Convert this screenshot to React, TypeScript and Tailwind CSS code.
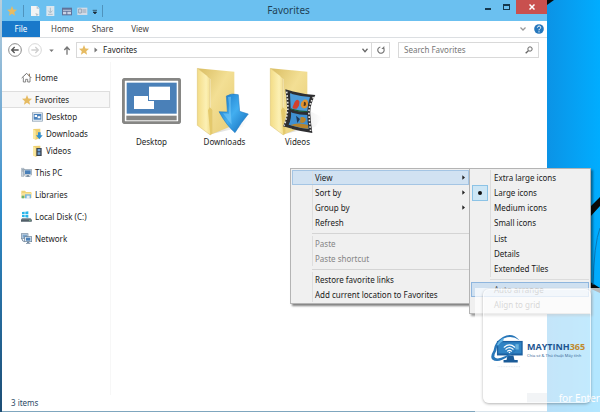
import type { ReactNode } from 'react'
import clsx from 'clsx'

const tabs = ['Home', 'Share', 'View']

const menuGroups = [
  [
    { label: 'View', submenu: true, active: true },
    { label: 'Sort by', submenu: true },
    { label: 'Group by', submenu: true },
    { label: 'Refresh' },
  ],
  [
    { label: 'Paste', disabled: true },
    { label: 'Paste shortcut', disabled: true },
  ],
  [{ label: 'Restore favorite links' }, { label: 'Add current location to Favorites' }],
]

const viewModes = ['Extra large icons', 'Large icons', 'Medium icons', 'Small icons', 'List', 'Details', 'Extended Tiles']

function Star({ className }: { className?: string }) {
  return (
    <svg viewBox="0 0 24 24" className={clsx('size-[10px] shrink-0', className)}>
      <path d="M12 0l3.4 8.2 8.6.7-6.6 5.8 2 8.8-7.4-4.8-7.4 4.8 2-8.8L0 8.900l8.600-.7z" fill="#e6bb62" />
    </svg>
  )
}

function HouseIcon() {
  return (
    <svg viewBox="0 0 33 33" className="size-[11px]">
      <path d="M7 16v14h7v-8h6v8h7V16" fill="#fff" stroke="#6f6f6f" strokeWidth="2.500" />
      <path d="M2 18L17 4l14 14" fill="none" stroke="#6f6f6f" strokeWidth="3" />
      <path d="M25 5v8" stroke="#8b6b4a" strokeWidth="3" />
    </svg>
  )
}

function DesktopSmallIcon() {
  return (
    <svg viewBox="0 0 33 30" className="h-[10px] w-[11px]">
      <rect x="1.500" y="2.500" width="30" height="25" fill="#e9f1f8" stroke="#7d93a8" strokeWidth="2" />
      <rect x="5" y="6" width="23" height="17" fill="#4a82bd" />
      <path d="M8 9h7v6H8zM17 13h8v6h-8z" fill="#fff" />
    </svg>
  )
}

function FolderSmallIcon({ kind }: { kind: 'downloads' | 'videos' }) {
  return (
    <svg viewBox="0 0 33 36" className="h-3 w-[11px]">
      <path d="M3 3l22-1v28l-14 5-8-4z" fill="#eecf70" />
      <path d="M3 3l8 5v27l-8-4z" fill="#fbe9a0" />
      {kind === 'downloads' ? (
        <path d="M18 13h8v9h6L22 34 12 22h6z" fill="#2f8fd0" />
      ) : (
        <>
          <path d="M13 9h16v24H13z" fill="#3c4450" />
          <path d="M17 12h8v7h-8zM17 22h8v7h-8z" fill="#6fa4d8" />
        </>
      )}
    </svg>
  )
}

function ThisPcIcon() {
  return (
    <svg viewBox="0 0 33 33" className="size-[11px]">
      <path d="M1 4h8v24H1z" fill="#cdd6de" stroke="#8797a6" strokeWidth="1.500" />
      <path d="M3 8h4M3 12h4" stroke="#5c6f82" strokeWidth="1.500" />
      <rect x="9" y="7" width="23" height="17" fill="#dfe7ee" stroke="#6d7f90" strokeWidth="1.500" />
      <rect x="12" y="10" width="17" height="11" fill="#4a80b8" />
      <path d="M17 24h7v4h4v2H13v-2h4z" fill="#8394a4" />
    </svg>
  )
}

function LibrariesIcon() {
  return (
    <svg viewBox="0 0 33 33" className="size-[11px]">
      <path d="M1 5h11l3 4h16v7H1z" fill="#f0d478" />
      <path d="M1 12h31v15H1z" fill="#f7e29a" />
      <path d="M2 20h8v8H2z" fill="#6fb36f" />
      <path d="M12 16h18v12H12z" fill="#79b8dd" />
      <path d="M17 20h9v10h-9z" fill="#e9eef2" />
    </svg>
  )
}

function DiskIcon() {
  return (
    <svg viewBox="0 0 33 33" className="size-[11px]">
      <path d="M3 3l8-1v8H3zM13 2l9-1v9h-9zM3 12h8v7l-8-1zM13 12h9v8l-9-1z" fill="#27b4ea" />
      <path d="M3 22h26l3 4v6H0v-6z" fill="#6f7c86" />
      <path d="M0 26h32v5H0z" fill="#525f69" />
      <path d="M24 28h5" stroke="#8fe28f" strokeWidth="2" />
    </svg>
  )
}

function NetworkIcon() {
  return (
    <svg viewBox="0 0 33 33" className="size-[11px]">
      <rect x="1" y="2" width="20" height="15" fill="#c4d3e0" stroke="#7389a0" strokeWidth="2" />
      <rect x="5" y="5" width="13" height="9" fill="#7ba5cd" />
      <path d="M3 18q0 7 8 8" stroke="#7389a0" strokeWidth="3" fill="none" />
      <rect x="11" y="11" width="21" height="15" fill="#dfe8f0" stroke="#637b93" strokeWidth="2" />
      <rect x="15" y="14" width="13" height="9" fill="#4a80b8" />
      <path d="M18 26h7v4h3v2H15v-2h3z" fill="#7389a0" />
    </svg>
  )
}

function DesktopIcon() {
  return (
    <svg viewBox="0 0 177 138" className="h-[46px] w-[59px]">
      <rect x="4" y="4" width="169" height="130" rx="5" fill="#fff" stroke="#868684" strokeWidth="9" />
      <rect x="14" y="14" width="150" height="93" fill="#4a80b8" />
      <rect x="36" y="54" width="60" height="39" fill="#fff" />
      <rect x="78" y="22" width="69" height="47" fill="#4a80b8" />
      <rect x="81" y="26" width="63" height="40" fill="#fff" />
      <rect x="13" y="113" width="151" height="14" fill="#868684" />
    </svg>
  )
}

function FolderIcon({ id, children }: { id: string; children: ReactNode }) {
  return (
    <svg viewBox="0 0 165 207" className="mr-1 h-[69px] w-[55px]">
      <defs>
        <linearGradient id={`${id}-back`} x1="0" y1="0" x2="1" y2="1">
          <stop offset="0" stopColor="#d9bd62" />
          <stop offset="0.450" stopColor="#f3df94" />
          <stop offset="1" stopColor="#e6cb74" />
        </linearGradient>
        <linearGradient id={`${id}-flap`} x1="0" y1="0" x2="1" y2="0">
          <stop offset="0" stopColor="#f3dc86" />
          <stop offset="0.600" stopColor="#fcf0b4" />
          <stop offset="1" stopColor="#efd77f" />
        </linearGradient>
        <linearGradient id={`${id}-shade`} x1="0" y1="0" x2="1" y2="0">
          <stop offset="0" stopColor="#9a9a9a" stopOpacity="0.400" />
          <stop offset="1" stopColor="#9a9a9a" stopOpacity="0" />
        </linearGradient>
      </defs>
      <path d="M100 120l62 30-20 30-96 22z" fill={`url(#${id}-shade)`} />
      <path d="M7 4l111 10v160l-72 29V36z" fill={`url(#${id}-back)`} />
      <path d="M7 4l31 23 6 8v86l7 8v70l-5 5L7 175z" fill={`url(#${id}-flap)`} stroke="#d8bd66" strokeWidth="1.500" />
      <path d="M39 130l5-9 7 8v70l-5 5z" fill="#e4c96c" />
      {children}
    </svg>
  )
}

function DownloadsIcon() {
  return (
    <FolderIcon id="downloads">
      <defs>
        <linearGradient id="arrow" x1="0" y1="0" x2="1" y2="1">
          <stop offset="0" stopColor="#1673c4" />
          <stop offset="0.500" stopColor="#42aef0" />
          <stop offset="1" stopColor="#0f66b5" />
        </linearGradient>
      </defs>
      <path d="M94 87q16-10 36-4l4 50 26 8q-22 26-40 56-26-22-48-63l25 1z" fill="url(#arrow)" stroke="#1c74bd" strokeWidth="1.500" />
      <path d="M99 90q6 26 3 50l-18-1q14 20 26 34-4-48-2-84z" fill="#7fd0fb" opacity="0.500" />
    </FolderIcon>
  )
}

function VideosIcon() {
  return (
    <FolderIcon id="videos">
      <path d="M52 67q44 14 90 17-17 30-15 58 2 30 6 56-44-6-88-20 14-28 12-56-1-30-5-55z" fill="#2e2e31" />
      <path d="M56 74q6 50 2 62-3 24-10 40M137 90q-16 26-14 54 2 28 5 48" fill="none" stroke="#e3e3e0" strokeWidth="5" strokeDasharray="5 5" />
      <path d="M66 79q30 9 60 11-8 22-8 44-26 1-50-8z" fill="#4c9bd8" />
      <path d="M69 136q26 8 49 8 0 22 4 42-32-3-60-13 9-18 7-37z" fill="#3f90d2" />
      <path d="M80 105q8-12 14-2 2 14-8 22-14 2-12-6zM78 126l12-14" fill="#d23f2c" />
      <path d="M108 98q14-2 12 14-2 14-14 12-12-6-6-18z" fill="#e0912f" />
      <path d="M108 104q6 0 6 7t-7 6z" fill="#4d341b" />
      <path d="M68 124q26 8 50 8v3q-26 2-50-8z" fill="#1f5a34" />
      <path d="M98 150q14-2 16 8-6 14-18 8zM76 172q20-6 44 2l1 11q-28-2-54-11z" fill="#b8842c" />
      <path d="M84 146l12 10-8 12z" fill="#203a58" />
    </FolderIcon>
  )
}

function BrandLogo() {
  return (
    <svg viewBox="0 0 104 106" className="h-[35px] w-[35px] shrink-0">
      <path d="M20 24h78v44H20z" fill="#1c5f9f" />
      <path d="M24 28h70v34H24z" fill="#2f83c4" />
      <path d="M52 68h18l3 14h10v7H40v-7h9z" fill="#1b5b98" />
      <path d="M88 22Q66-4 38 12 12 28 10 52q-12 20-4 28 16 14 50-10 22-14 34-34-20 22-44 34-28 14-34 2 0-8 6-18Q22 26 42 16q24-10 46 6z" fill="#2876b8" />
      <path d="M20 36q6-14 22-22l-3 10q-12 6-15 14z" fill="#62b3e4" />
      <g fill="none" stroke="#fff" strokeWidth="3.500" strokeLinecap="round">
        <path d="M42 43q16-14 32 0M47 49q11-9 22 0M52 55q6-5 12 0" />
      </g>
      <circle cx="58" cy="59" r="2.500" fill="#fff" />
      <path d="M76 34h10v16H76z" fill="#6cb3de" />
      <path d="M22 102h70" stroke="#c8d0d8" strokeWidth="1.500" strokeDasharray="3 2" />
    </svg>
  )
}

function TitleBar() {
  return (
    <header className="relative flex h-[21px] items-start justify-between bg-[#6bc0f0]">
      <div className="flex h-full items-center pl-[5px]">
        <Star />
        <span className="ml-[6px] h-3 w-px bg-[#4f93bd]" />
        <svg viewBox="0 0 210 36" className="ml-1 h-3 w-[70px]">
          <path d="M9 3h18l7 7v23H9z" fill="#f3f4f4" />
          <path d="M26 3v8h8M22 24l10 4-6 6z" fill="#b9c2c9" />
          <path d="M55 3h24v30H55z" fill="#dbe6ee" />
          <path d="M67 8v14M61 17l6 7 6-7M60 28h14" fill="none" stroke="#a9bccb" strokeWidth="3" />
          <path d="M102 8h30v23h-30z" fill="#5f7199" />
          <path d="M105 14h24v3h-24zM105 20h10v8h-10zM118 20h11v8h-11z" fill="#c9d2e4" />
          <path d="M148 8h30v22h-30z" fill="#d3dbe6" />
          <path d="M152 12h8v12h-8zM163 15h12M163 21h12" stroke="#8997ab" strokeWidth="2.500" fill="none" />
          <path d="M194 16h13M195 21h11l-5 6z" stroke="#1c2b36" strokeWidth="2" fill="#1c2b36" />
        </svg>
        <span className="ml-1 h-3 w-px bg-[#4f93bd]" />
      </div>
      <h1 className="absolute inset-x-0 top-[2px] ml-7 text-center text-[10px] leading-4 text-[#1f4256]">Favorites</h1>
      <div className="flex h-[14px]">
        <button aria-label="Minimize" className="flex w-[19px] items-center justify-center">
          <span className="mt-1 h-[2px] w-[6px] bg-[#16384e]" />
        </button>
        <button aria-label="Maximize" className="flex w-[19px] items-center justify-center">
          <span className="h-[6px] w-[7px] border border-t-2 border-[#16384e]" />
        </button>
        <button aria-label="Close" className="flex w-[31px] items-center justify-center bg-[#c9504e]">
          <svg viewBox="0 0 12 12" className="size-[6px]">
            <path d="M1 1l10 10M11 1L1 11" stroke="#fff" strokeWidth="3" />
          </svg>
        </button>
      </div>
    </header>
  )
}

function Ribbon() {
  return (
    <nav className="flex h-[17px] items-stretch border-b border-[#dcdfe2] text-[#444]">
      <button className="w-[38px] bg-[#1979ca] text-white">File</button>
      <div className="flex gap-[18px] pl-[11px]">
        {tabs.map((tab) => (
          <button key={tab}>{tab}</button>
        ))}
      </div>
      <div className="ml-auto flex items-center gap-2 pr-[3px]">
        <button aria-label="Expand ribbon">
          <svg viewBox="0 0 12 8" className="h-1 w-[6px]">
            <path d="M1 1l5 5 5-5" fill="none" stroke="#999" strokeWidth="2.500" />
          </svg>
        </button>
        <button aria-label="Help">
          <svg viewBox="0 0 30 30" className="size-[10px]">
            <circle cx="15" cy="15" r="14.500" fill="#2577bd" />
            <path d="M10 11q1-5 5.500-5T20 10.500q0 3-3 4.500-2 1.500-2 4" fill="none" stroke="#fff" strokeWidth="3" />
            <circle cx="15" cy="23.500" r="2" fill="#fff" />
          </svg>
        </button>
      </div>
    </nav>
  )
}

function AddressRow() {
  return (
    <div className="flex h-6 items-center pr-2 pl-[6px]">
      <button aria-label="Back">
        <svg viewBox="0 0 42 42" className="size-[14px]">
          <circle cx="21" cy="21" r="19" fill="none" stroke="#8a8a8a" strokeWidth="3" />
          <path d="M32 21H12M20 12l-9 9 9 9" fill="none" stroke="#555" strokeWidth="4" />
        </svg>
      </button>
      <button aria-label="Forward" className="ml-[6px]">
        <svg viewBox="0 0 42 42" className="size-[14px]">
          <circle cx="21" cy="21" r="19" fill="none" stroke="#d8d8d8" strokeWidth="3" />
          <path d="M10 21h20M22 12l9 9-9 9" fill="none" stroke="#cfcfcf" strokeWidth="4" />
        </svg>
      </button>
      <button aria-label="Recent locations" className="ml-[7px]">
        <svg viewBox="0 0 12 8" className="h-[3px] w-[5px]">
          <path d="M0 1h12L6 8z" fill="#777" />
        </svg>
      </button>
      <button aria-label="Up" className="ml-[9px]">
        <svg viewBox="0 0 24 27" className="h-[9px] w-2">
          <path d="M12 26V4M4 12l8-9 8 9" fill="none" stroke="#777" strokeWidth="4" />
        </svg>
      </button>
      <div className="ml-[5px] flex h-4 flex-1 items-center border border-[#d9d9d9]">
        <Star className="ml-[2px]" />
        <svg viewBox="0 0 9 14" className="ml-[5px] h-[6px] w-1">
          <path d="M1 1l7 6-7 6z" fill="#777" />
        </svg>
        <span className="ml-[5px] text-[#1e1e1e]">Favorites</span>
        <button aria-label="Previous locations" className="ml-auto flex w-3 justify-center">
          <svg viewBox="0 0 12 9" className="h-[5px] w-[6px]">
            <path d="M1 1l5 6 5-6" fill="none" stroke="#666" strokeWidth="2.500" />
          </svg>
        </button>
        <button aria-label="Refresh" className="flex h-full w-[18px] items-center justify-center border-l border-[#d9d9d9]">
          <svg viewBox="0 0 24 24" className="size-2">
            <path d="M19 6a9.500 9.500 0 1 1-9-3" fill="none" stroke="#777" strokeWidth="3.500" />
            <path d="M13 9h9V0z" fill="#777" />
          </svg>
        </button>
      </div>
      <label className="ml-2 flex h-4 w-[141px] items-center border border-[#d9d9d9] pr-[5px] pl-[5px]">
        <input type="search" aria-label="Search Favorites" placeholder="Search Favorites" className="w-full min-w-0 outline-none placeholder:text-[#777]" />
        <svg viewBox="0 0 24 24" className="size-2 shrink-0">
          <circle cx="15" cy="9" r="6.500" fill="none" stroke="#666" strokeWidth="3" />
          <path d="M10 14l-8 8" stroke="#666" strokeWidth="4" />
        </svg>
      </label>
    </div>
  )
}

function NavItem({ icon, label, className }: { icon: ReactNode; label: string; className?: string }) {
  return (
    <a href="#" className={clsx('flex h-[17px] items-center gap-[3px] pl-[19px]', className)}>
      <span className="flex w-[11px] justify-center">{icon}</span>
      {label}
    </a>
  )
}

function Sidebar() {
  return (
    <aside className="flex w-[109px] flex-col border-r border-[#f7f7f7] pt-[7px] text-[#1e1e1e]">
      <NavItem icon={<HouseIcon />} label="Home" />
      <NavItem icon={<Star />} label="Favorites" className="mt-[5px] border border-l-0 border-[#dedede] bg-[#f7f7f7]" />
      <NavItem icon={<DesktopSmallIcon />} label="Desktop" className="pl-[30px]" />
      <NavItem icon={<FolderSmallIcon kind="downloads" />} label="Downloads" className="pl-[30px]" />
      <NavItem icon={<FolderSmallIcon kind="videos" />} label="Videos" className="pl-[30px]" />
      <div className="mt-[5px] flex flex-col gap-[5px]">
        <NavItem icon={<ThisPcIcon />} label="This PC" />
        <NavItem icon={<LibrariesIcon />} label="Libraries" />
        <NavItem icon={<DiskIcon />} label="Local Disk (C:)" />
        <NavItem icon={<NetworkIcon />} label="Network" />
      </div>
    </aside>
  )
}

function FileTile({ icon, label }: { icon: ReactNode; label: string }) {
  return (
    <a href="#" className="flex w-[73px] flex-col items-center">
      <span className="flex h-[70px] items-center">{icon}</span>
      <span className="leading-3">{label}</span>
    </a>
  )
}

function Submenu() {
  return (
    <div role="menu" className="absolute -top-px left-[178px] flex w-[122px] flex-col border border-[#b4b4b4] bg-[#f0f0f0] p-px shadow-[2px_2px_2px_rgba(0,0,0,0.4)]">
      <div className="flex h-[107px] flex-col">
        {viewModes.map((mode) => (
          <button key={mode} role="menuitemradio" aria-checked={mode === 'Large icons'} className="flex flex-1 items-center text-left">
            <span
              className={clsx(
                'mr-[2px] ml-px flex h-full w-4 items-center justify-center',
                mode === 'Large icons' && 'border border-[#8cc3e6] bg-[#cde6f5]',
              )}
            >
              {mode === 'Large icons' && <span className="size-1 rounded-full bg-[#111]" />}
            </span>
            <span className="flex h-full items-center border-l border-[#dcdcdc] pl-[3px]">{mode}</span>
          </button>
        ))}
      </div>
      <hr className="my-[2px] ml-[19px] border-[#dcdcdc]" />
      <button role="menuitem" className="h-[15px] border border-[#8fb6de] bg-[#cfe0f0] pl-[22px] text-left leading-3 text-[#555]">
        Auto arrange
      </button>
      <button role="menuitem" className="h-[15px] pl-[23px] text-left text-[#555]">
        Align to grid
      </button>
    </div>
  )
}

function ContextMenu() {
  return (
    <div role="menu" className="absolute top-[168px] left-[290px] w-[181px] border border-[#b4b4b4] bg-[#f0f0f0] p-px text-[#1a1a1a] shadow-[2px_2px_2px_rgba(0,0,0,0.5)]">
      {menuGroups.map((group, index) => (
        <div key={group[0].label}>
          {index > 0 && <hr className="mt-[3px] mb-[2px] ml-5 border-[#d4d4d4]" />}
          {group.map((item) => (
            <button
              key={item.label}
              role="menuitem"
              disabled={item.disabled}
              className={clsx(
                'flex h-[15px] w-full items-center pr-1 text-left disabled:text-[#858585]',
                item.active && 'bg-[#d1e2f2] outline -outline-offset-1 outline-[#a4c5e4]',
              )}
            >
              <span className="mr-[2px] ml-5 h-full w-px bg-[#dedede]" />
              {item.label}
              {item.submenu && (
                <svg viewBox="0 0 9 14" className="ml-auto h-[5px] w-[3px]">
                  <path d="M1 0l8 7-8 7z" fill="#222" />
                </svg>
              )}
            </button>
          ))}
        </div>
      ))}
      <Submenu />
    </div>
  )
}

function Watermark() {
  return (
    <>
      <div className="absolute right-0 bottom-0 h-[124px] w-[125px] bg-white/70" />
      <div className="absolute right-0 bottom-[6px] flex items-center gap-3 text-[10px] leading-4 whitespace-nowrap text-white">
        <span className="h-[10px] w-5 bg-[#dfe5ea]/50" />
        <p>for Enter</p>
      </div>
      <div className="absolute right-[9px] bottom-[9px] flex h-[114px] w-[108px] flex-col justify-center rounded-md border border-white/60 bg-white/20 pt-2 pl-[6px] shadow-[0_1px_3px_rgba(0,0,0,0.3)]">
        <div className="flex items-center gap-[2px]">
          <BrandLogo />
          <div>
            <p className="font-['Open_Sans',sans-serif] text-[9px] leading-[12px] font-bold text-[#1d5590]">
              MAYTINH<span className="text-[#c08a2e]">365</span>
            </p>
            <p className="text-[4px] leading-[6px] whitespace-nowrap text-[#3a6a9a]">Chia sẻ &amp; Thủ thuật Máy tính</p>
          </div>
        </div>
      </div>
    </>
  )
}

export default function App() {
  return (
    <div className="relative flex min-h-screen overflow-hidden bg-[#00a8fb] font-['Noto_Sans',sans-serif] text-[8px]">
      <div className="w-[2px] bg-linear-to-b from-[#b9cfdc] via-[#2f8dcb] to-[#1d4d74]" />
      <main className="flex min-w-0 flex-1 flex-col border-b border-[#7fa6be] bg-white">
        <TitleBar />
        <Ribbon />
        <AddressRow />
        <div className="flex flex-1">
          <Sidebar />
          <section className="flex items-start pt-1 pl-1 text-[#1e1e1e]">
            <FileTile icon={<DesktopIcon />} label="Desktop" />
            <FileTile icon={<DownloadsIcon />} label="Downloads" />
            <FileTile icon={<VideosIcon />} label="Videos" />
          </section>
        </div>
        <footer className="flex h-4 items-center pl-[9px] text-[#2c4a66]">3 items</footer>
      </main>
      <div className="w-[53px] bg-linear-to-r from-[#0b93e6] to-[#00adff]">
        <svg viewBox="0 0 53 412" className="w-full">
          <path d="M0 0h7L0 5z" fill="#0a0a0a" />
          <path d="M43 207l10-10v9L43 217zM40 280l13 8v5l-13-6z" fill="#0a0a0a" />
          <path d="M53 228q-6 16-7 57" fill="none" stroke="#0878b8" strokeWidth="1" />
        </svg>
      </div>
      <ContextMenu />
      <Watermark />
    </div>
  )
}
